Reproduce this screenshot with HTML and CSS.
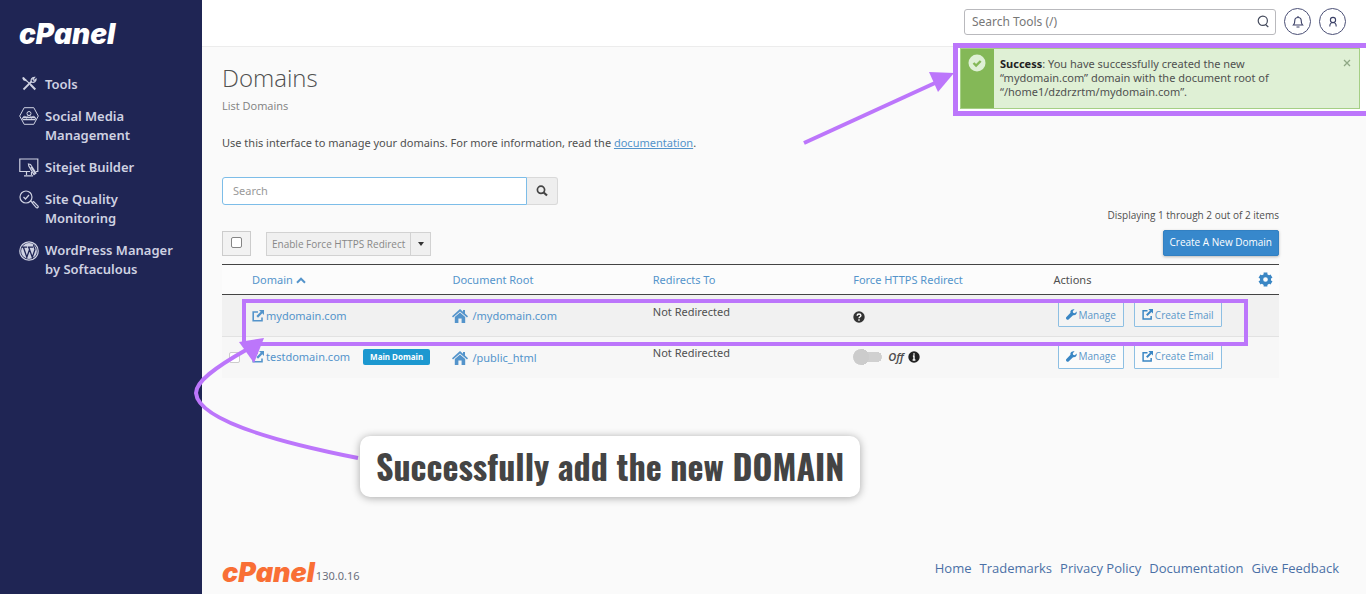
FILE: index.html
```html
<!DOCTYPE html>
<html lang="en">
<head>
<meta charset="utf-8">
<title>cPanel - Domains</title>
<link rel="stylesheet" href="styles.css">
</head>
<body>
<svg class="sprite" aria-hidden="true">
  <symbol id="external" viewBox="0 0 12 12"><path d="M6 2H1.200v8.800H10V7.500" fill="none" stroke="currentColor" stroke-width="1.600"/><path d="M7 0h5v5l-1.700-1.700L6 7.700 4.400 6.100 8.700 1.800z" fill="currentColor"/></symbol>
  <symbol id="home" viewBox="0 0 16 14"><path d="M8 0l3 2.700V1h2v3.500L16 7.200l-1 1.200-7-6-7 6-1-1.200z" fill="currentColor"/><path d="M8 3.500l5.200 4.400V14H9.600V9.500H6.400V14H2.800V7.900z" fill="currentColor"/></symbol>
  <symbol id="wrench" viewBox="0 0 12 12"><path d="M11.600 2.600L9.600 4.600 7.700 4.200 7.400 2.400l2-2C7.700-.3 5.700.5 5 2.200c-.3.700-.3 1.400-.1 2L.5 8.700a1.700 1.700 0 0 0 2.600 2.500L7.700 6.800c2.300.7 4.600-1.300 3.900-4.200z" fill="currentColor"/></symbol>
</svg>

<div class="app">
  <aside class="sidebar">
    <a class="brand" href="#">cPanel</a>
    <nav class="menu" aria-label="Main">
      <a href="#">
        <svg width="18" height="17" viewBox="0 0 18 17" fill="none" stroke="currentColor"><path d="M3.500 14.500l8-8" stroke-width="1.800"/><path d="M11.500 7c-1.200-2.200.3-4.800 3-4.700l-1.600 2 1.200 1.200 2-1.400c.1 2.300-2 3.900-4.600 2.900" stroke-width="1.200"/><path d="M3.500 3L7 6.200l4 4" stroke-width="1.200"/><path d="M3 2.300l1 2.200 2 .8M10.700 9.700l4.600 4.800" stroke-width="2"/></svg>
        <span>Tools</span>
      </a>
      <a href="#">
        <svg width="20" height="18" viewBox="0 0 20 18" fill="none" stroke="currentColor"><path d="M5.200 .7h9.600L19.300 9l-4.500 8.300H5.200L.7 9z"/><circle cx="10" cy="6.500" r="2"/><path d="M7 11c0-3 6-3 6 0M3.500 12c0-3.500 4-3.500 4-.5M12.500 11.500c0-3 4-3 4 .5M4 10.500h12"/><path d="M3.500 12.500h13" stroke-width="1.500"/></svg>
        <span>Social Media Management</span>
      </a>
      <a href="#">
        <svg width="20" height="19" viewBox="0 0 20 19" fill="none" stroke="currentColor" stroke-width="1.200"><path d="M11 13.500H.8V1h18v12.500H17M7.500 14v3M5 17.800h9M12.500 14v3"/><path d="M9.500 6l2 .5 5.500 8.500-2 1.500L9.800 8zM12 9l4 6"/></svg>
        <span>Sitejet Builder</span>
      </a>
      <a href="#">
        <svg width="20" height="19" viewBox="0 0 20 19" fill="none" stroke="currentColor" stroke-width="1.200"><circle cx="7" cy="7" r="6"/><path d="M4.500 7l2 2L10 5M11.500 11l2 1.500"/><path d="M13.200 12.800l1.400-1.200 4.400 4.500c.8 1-.8 2.300-1.700 1.500z"/></svg>
        <span>Site Quality Monitoring</span>
      </a>
      <a href="#">
        <svg width="20" height="20" viewBox="0 0 20 20"><circle cx="10" cy="10" r="9.200" fill="none" stroke="currentColor" stroke-width="1.200"/><circle cx="10" cy="10" r="7.900" fill="currentColor"/><path d="M2.500 6.200H8M8.800 6.200H14M4.500 6.500l3.300 9.700 2.700-7.500M9.800 6.500l3.500 9.800 2.500-7.300c.6-2-1.500-3-1-5" fill="none" stroke="#1f2554" stroke-width="1.300"/></svg>
        <span>WordPress Manager by Softaculous</span>
      </a>
    </nav>
  </aside>

  <div class="main">
    <header class="topbar">
      <form class="tool-search">
        <input type="text" placeholder="Search Tools (/)" aria-label="Search Tools">
        <button type="button" aria-label="Search"><svg width="13" height="13" viewBox="0 0 13 13" fill="none" stroke="#444a5c" stroke-width="1.200"><circle cx="5.800" cy="5.800" r="4.600"/><path d="M8.500 9.500l2.800 2.500"/></svg></button>
      </form>
      <button class="round" type="button" aria-label="Notifications"><svg width="12" height="14" viewBox="0 0 12 14" fill="none" stroke="currentColor" stroke-width="1.100"><path d="M1.500 10c1-1 1.300-2 1.300-4.500 0-4 6.400-4 6.400 0 0 2.500.3 3.500 1.300 4.500zM4.500 12h3M6 1v1.500"/></svg></button>
      <button class="round" type="button" aria-label="Account"><svg width="12" height="14" viewBox="0 0 12 14" fill="none" stroke="currentColor" stroke-width="1.100"><circle cx="6" cy="5" r="2.600"/><path d="M2.800 11.500c0-2.500 1.200-4 3.200-4s3.200 1.500 3.200 4"/></svg></button>
    </header>

    <main class="content">
      <h1>Domains</h1>
      <p class="crumb">List Domains</p>
      <p class="intro">Use this interface to manage your domains. For more information, read the <a href="#">documentation</a>.</p>
      <form class="search">
        <input type="text" placeholder="Search" aria-label="Search domains">
        <button type="button" aria-label="Search"><svg width="12" height="12" viewBox="0 0 12 12" fill="none" stroke="#444"><circle cx="5" cy="4.800" r="3.600" stroke-width="1.700"/><path d="M7.700 7.500l3.300 3" stroke-width="2.200"/></svg></button>
      </form>
      <div class="toolbar">
        <div class="bulk">
          <label class="select-all"><input type="checkbox" aria-label="Select all"></label>
          <div class="split">
            <button type="button" disabled>Enable Force HTTPS Redirect</button>
            <button type="button" class="caret" aria-label="More actions"></button>
          </div>
        </div>
        <div class="summary">
          <p>Displaying 1 through 2 out of 2 items</p>
          <button type="button" class="primary">Create A New Domain</button>
        </div>
      </div>

      <div class="table-wrap">
        <table>
          <colgroup><col class="c-pick"><col><col><col><col><col><col class="c-gear"></colgroup>
          <thead>
            <tr>
              <th></th>
              <th><a href="#">Domain <svg width="10" height="7" viewBox="0 0 10 7" fill="none" stroke="currentColor" stroke-width="2"><path d="M1 5.700l4-4 4 4"/></svg></a></th>
              <th><a href="#">Document Root</a></th>
              <th><a href="#">Redirects To</a></th>
              <th><a href="#">Force HTTPS Redirect</a></th>
              <th>Actions</th>
              <th><button type="button" class="gear" aria-label="Table settings"><svg width="15" height="15" viewBox="0 0 16 16"><g stroke="currentColor" stroke-width="4"><path d="M8 .6v14.800M1.600 4.300l12.800 7.400M1.600 11.700l12.800-7.400"/></g><circle cx="8" cy="8" r="4.200" fill="#fcfcfc" stroke="currentColor" stroke-width="3.400"/></svg></button></th>
            </tr>
          </thead>
          <tbody>
            <tr class="new">
              <td></td>
              <td><a class="item" href="#"><svg width="12" height="12"><use href="#external"/></svg>mydomain.com</a></td>
              <td><a class="item" href="#"><svg class="home" width="16" height="14"><use href="#home"/></svg>/mydomain.com</a></td>
              <td class="raised">Not Redirected</td>
              <td><svg class="dot" width="12" height="12" viewBox="0 0 12 12"><circle cx="6" cy="6" r="5.700" fill="#333"/><path d="M4.200 4.700c0-2.400 3.700-2.200 3.700-.2C7.900 5.700 6 5.800 6 7.300M6 8.300v1.400" fill="none" stroke="#fff" stroke-width="1.400"/></svg></td>
              <td class="actions"><div><button type="button"><svg width="11" height="11"><use href="#wrench"/></svg>Manage</button><button type="button"><svg width="11" height="11"><use href="#external"/></svg>Create Email</button></div></td>
              <td></td>
            </tr>
            <tr>
              <td class="pick"><input type="checkbox" aria-label="Select testdomain.com"></td>
              <td><a class="item" href="#"><svg width="12" height="12"><use href="#external"/></svg>testdomain.com</a><span class="badge">Main Domain</span></td>
              <td><a class="item" href="#"><svg class="home" width="16" height="14"><use href="#home"/></svg>/public_html</a></td>
              <td class="raised">Not Redirected</td>
              <td><label class="toggle"><input type="checkbox" role="switch"><i>Off</i></label><svg class="dot" width="12" height="12" viewBox="0 0 12 12"><circle cx="6" cy="6" r="5.700" fill="#222"/><path d="M6 2.200v1.500M4.900 5H6v4M4.600 9h2.800" fill="none" stroke="#fff" stroke-width="1.400"/></svg></td>
              <td class="actions"><div><button type="button"><svg width="11" height="11"><use href="#wrench"/></svg>Manage</button><button type="button"><svg width="11" height="11"><use href="#external"/></svg>Create Email</button></div></td>
              <td></td>
            </tr>
          </tbody>
        </table>
        <div class="row-frame"></div>
      </div>
    </main>

    <footer class="footer">
      <div><span class="brand orange">cPanel</span><span class="version">130.0.16</span></div>
      <nav aria-label="Footer"><a href="#">Home</a><a href="#">Trademarks</a><a href="#">Privacy Policy</a><a href="#">Documentation</a><a href="#">Give Feedback</a></nav>
    </footer>

    <div class="notice-frame">
      <div class="notice" role="status">
        <div class="notice-icon"><svg width="18" height="18" viewBox="0 0 18 18"><circle cx="9" cy="9" r="8.500" fill="#dff0d5"/><path d="M5.500 9l2.600 2.600L12.700 7" fill="none" stroke="#84b857" stroke-width="2.400"/></svg></div>
        <p><b>Success</b>: You have successfully created the new “mydomain.com” domain with the document root of “/home1/dzdrzrtm/mydomain.com”.</p>
        <button type="button" aria-label="Close"><svg width="8" height="8" viewBox="0 0 8 8" stroke="#8fa885" stroke-width="1.300"><path d="M1 1l6 6M7 1L1 7"/></svg></button>
      </div>
    </div>
    <svg class="arrow-notice" width="152" height="76" viewBox="0 0 152 76"><path d="M1 74L132 14" stroke="#bc76fb" stroke-width="4"/><path d="M151 4L126 3l9 20z" fill="#bc76fb"/></svg>
    <svg class="arrow-row" width="172" height="128" viewBox="0 0 172 128"><path d="M56 18C24 36 6 50 6 61c2 26 76 48 162 65" fill="none" stroke="#bc76fb" stroke-width="4"/><path d="M74 6L49 10l15 21z" fill="#bc76fb"/></svg>
    <div class="callout">Successfully add the new DOMAIN</div>
  </div>
</div>
</body>
</html>
```
FILE: styles.css
```css
* { box-sizing: border-box; }
body {
  margin: 0;
  font: 11px/14px "Noto Sans", sans-serif;
  color: #505050;
  background: #fafafa;
}
a { color: #5494cb; text-decoration: none; }
h1, p { margin: 0; }
button, input { font: inherit; color: inherit; margin: 0; }
svg { flex: none; }
.sprite { display: none; }

.app { display: flex; min-height: 100vh; }

.sidebar { width: 202px; flex: none; background: #1f2554; padding: 19px; }
.brand {
  display: block;
  font: italic 900 28px/30px Inter, sans-serif;
  color: #fff;
}
.sidebar .brand { padding-bottom: 26px; }
.menu { display: flex; flex-direction: column; gap: 13px; }
.menu a {
  display: flex;
  align-items: flex-start;
  gap: 6px;
  color: #cfd2e2;
  font: 600 13px/19px "Noto Sans", sans-serif;
}
.menu svg { width: 20px; }

.main { flex: 1; min-width: 0; position: relative; display: flex; flex-direction: column; }

.topbar {
  display: flex;
  justify-content: flex-end;
  align-items: center;
  gap: 8px;
  height: 47px;
  padding: 0 20px 3px 0;
  background: #fff;
  border-bottom: 1px solid #ececec;
}
.tool-search {
  display: flex;
  align-items: center;
  width: 312px;
  height: 26px;
  border: 1px solid #b9b9bd;
  border-radius: 3px;
}
.tool-search input { flex: 1; min-width: 0; border: 0; background: none; padding: 0 7px; font-size: 12px; outline: 0; }
.tool-search input::placeholder { color: #777; }
.tool-search button { display: flex; border: 0; background: none; padding: 0 5px; }
.round {
  display: flex;
  align-items: center;
  justify-content: center;
  width: 27px;
  height: 27px;
  padding: 0;
  border: 1px solid #4b5076;
  border-radius: 50%;
  background: #fff;
  color: #3a3f66;
}

.content { flex: 1; padding: 16px 87px 0 20px; }
h1 { font-family: "Open Sans", sans-serif; font-size: 24px; line-height: 30px; font-weight: 300; }
.crumb { padding-top: 6px; font-family: "Open Sans", sans-serif; color: #808080; }
.intro { padding-top: 22px; line-height: 16px; }
.intro a { text-decoration: underline; }

.search { display: flex; width: 336px; height: 28px; margin-top: 26px; }
.search input {
  flex: 1;
  min-width: 0;
  padding: 0 10px;
  border: 1px solid #7dbde8;
  border-radius: 3px 0 0 3px;
  background: #fff;
  outline: 0;
}
.search input::placeholder { color: #999; }
.search button {
  display: flex;
  align-items: center;
  justify-content: center;
  width: 31px;
  border: 1px solid #d9d9d9;
  border-left: 0;
  border-radius: 0 3px 3px 0;
  background: #eee;
}

.toolbar { display: flex; justify-content: space-between; align-items: flex-end; padding: 3px 0 8px; }
.bulk { display: flex; align-items: center; gap: 15px; }
.select-all {
  display: flex;
  justify-content: center;
  align-items: center;
  width: 29px;
  height: 25px;
  padding-bottom: 3px;
  border: 1px solid #ccc;
  background: #f2f2f2;
}
input[type="checkbox"] {
  appearance: none;
  width: 11px;
  height: 11px;
  border: 1px solid #858585;
  border-radius: 2px;
  background: #fff;
}
.split { display: flex; }
.split button, .summary, .actions button { font-family: "Open Sans", sans-serif; font-size: 10px; }
.split button {
  height: 24px;
  padding: 0 5px;
  border: 1px solid #d2d2d2;
  background: #f0f0f0;
  color: #888;
}
.split .caret { display: flex; align-items: center; justify-content: center; width: 20px; padding: 0; border-left: 0; }
.caret::before { content: ""; border: 3px solid transparent; border-top: 4px solid #333; border-bottom: 0; }
.summary { display: flex; flex-direction: column; align-items: flex-end; gap: 8px; }
.primary {
  height: 26px;
  padding: 0 6px 2px;
  border: 1px solid #3280c2;
  border-radius: 2px;
  background: #3788cc;
  color: #fff;
  box-shadow: 0 1px 3px #0004;
}

.table-wrap { position: relative; }
table { width: 100%; table-layout: fixed; border-collapse: collapse; }
.c-pick { width: 30px; }
.c-gear { width: 25px; }
th, td { padding: 0; text-align: left; font-weight: 400; white-space: nowrap; }
th { height: 30px; border-top: 1px solid #444; border-bottom: 1px solid #444; background: #fcfcfc; }
td { height: 41px; border-top: 1px solid #e2e2e2; background: #f7f7f7; }
.new td { height: 42px; background: #f1f1f1; }
.item { display: inline-flex; align-items: center; gap: 2px; vertical-align: middle; }
.home { margin-right: 2px; }
.dot { vertical-align: middle; }
.raised { padding-bottom: 8px; }
.pick { padding-left: 7px; }
.pick input { display: block; border-color: #ccc; }
.badge {
  display: inline-block;
  margin-left: 13px;
  padding: 0 7px;
  border-radius: 2px;
  background: #1c98d0;
  color: #fff;
  font-size: 8px;
  line-height: 16px;
  font-weight: 700;
  vertical-align: middle;
}
.toggle i { font-weight: 600; padding: 0 4px 0 6px; vertical-align: middle; }
.toggle input[type="checkbox"] {
  width: 29px;
  height: 16px;
  border: 0;
  border-radius: 8px;
  vertical-align: middle;
  background: radial-gradient(circle at 8px 8px, #ccc 8px, transparent 8px),
    linear-gradient(#d0d0d0, #d0d0d0) 8px 3px / 16px 10px no-repeat,
    radial-gradient(circle at 24px 8px, #d0d0d0 5px, transparent 5px);
}
.actions { padding-bottom: 2px; }
.actions div { display: flex; gap: 10px; padding-left: 4px; }
.actions button {
  display: flex;
  align-items: center;
  gap: 2px;
  height: 25px;
  padding: 0 7px;
  border: 1px solid #8dbfe3;
  border-radius: 1px;
  background: #fbfbfb;
  color: #5b97c9;
}
.new .actions button { background: #f4f4f4; }
.actions svg { color: #3a86c4; }
.gear { display: flex; border: 0; background: none; padding: 0 4px; color: #3a86c4; }
.row-frame {
  position: absolute;
  top: 35px;
  left: 20px;
  right: 31px;
  height: 47px;
  border: 4px solid #bc76fb;
}

.footer { display: flex; justify-content: space-between; align-items: flex-start; padding: 0 27px 6px 20px; }
.footer > div { display: flex; align-items: flex-end; }
.orange { color: #f96f35; padding-top: 2px; font-size: 27px; }
.version { padding-left: 1px; line-height: 24px; color: #6a6f7c; }
.footer nav { display: flex; gap: 8px; font: 13px/24px "Open Sans", sans-serif; }
.footer nav a { color: #4a70a6; }

.notice-frame {
  position: absolute;
  top: 43px;
  right: 0;
  width: 413px;
  border: solid #bc76fb;
  border-width: 5px 0 5px 5px;
  background: #fff;
  padding: 0 6px 2px 2px;
}
.notice { display: flex; min-height: 61px; border: 1px solid #a5cf85; background: #dff0d5; }
.notice-icon { width: 33px; flex: none; padding: 5px 7px; background: #84b857; }
.notice p { flex: 1; padding: 8px 60px 8px 6px; }
.notice p b { color: #222; }
.notice button { align-self: flex-start; display: flex; border: 0; background: none; padding: 10px 8px; }

.arrow-notice { position: absolute; top: 69px; right: 411px; }
.arrow-row { position: absolute; top: 332px; left: -12px; }
.callout {
  position: absolute;
  top: 436px;
  left: 158px;
  padding: 10px 16px 11px;
  border-radius: 10px;
  background: #fff;
  box-shadow: 0 1px 8px #0005;
  font: 700 34px/40px Oswald, "Liberation Sans Narrow", sans-serif;
  color: #444;
  white-space: nowrap;
}
```
